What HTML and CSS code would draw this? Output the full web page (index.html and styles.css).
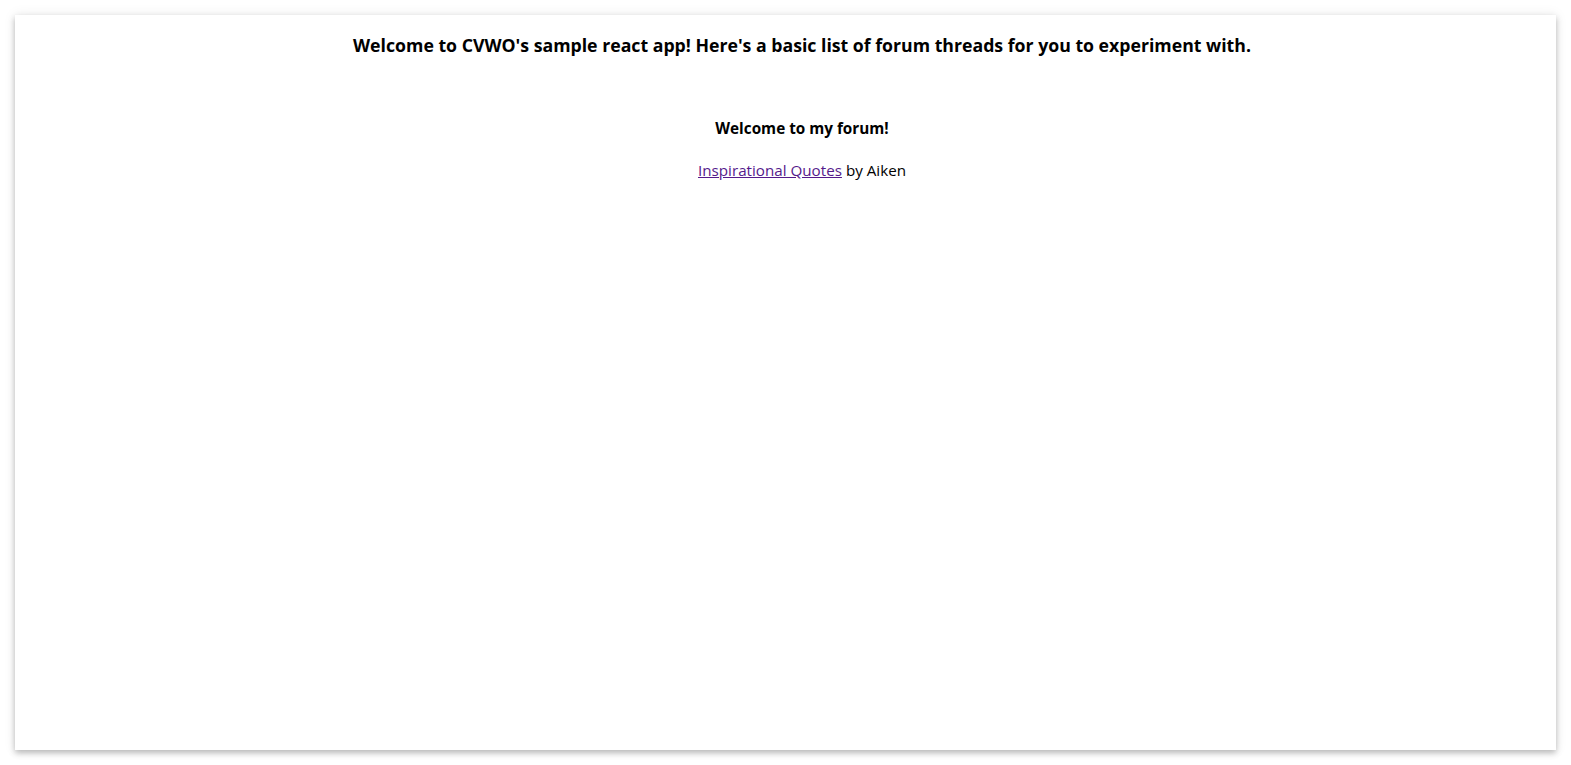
FILE: index.html
```html
<!DOCTYPE html>
<html>
<head>
<meta charset="utf-8">
<link rel="stylesheet" href="styles.css">
</head>
<body>
<div class="card">
  <h3 class="title">Welcome to CVWO's sample react app! Here's a basic list of forum threads for you to experiment with.</h3>
  <div class="forum">
    <h4 class="forum-title">Welcome to my forum!</h4>
    <p class="thread"><a class="thread-link" href="#">Inspirational Quotes</a> by Aiken</p>
  </div>
</div>
</body>
</html>
```

FILE: styles.css
```css
html, body {
  margin: 0;
  padding: 0;
  background: #ffffff;
}
body {
  padding: 15px 15px 15px 15px;
  font-family: "Open Sans", "Noto Sans", sans-serif;
  color: #000;
}
.card {
  height: 735px;
  box-sizing: border-box;
  background: #fff;
  box-shadow: 0 3px 6px rgba(0,0,0,0.25), 0 0 12px rgba(0,0,0,0.08);
  padding: 0 0 0 33px;
  text-align: center;
  display: flex;
  flex-direction: column;
}
.title {
  margin: 0;
  padding-top: 18px;
  font-size: 17.7px;
  font-weight: 700;
  line-height: 24px;
}
.forum {
  padding-top: 61px;
}
.forum-title {
  margin: 0;
  font-size: 15.3px;
  font-weight: 700;
  line-height: 20px;
}
.thread {
  margin: 21px 0 0;
  font-size: 15.2px;
  line-height: 22px;
}
.thread-link {
  color: #551a8b;
}
```
